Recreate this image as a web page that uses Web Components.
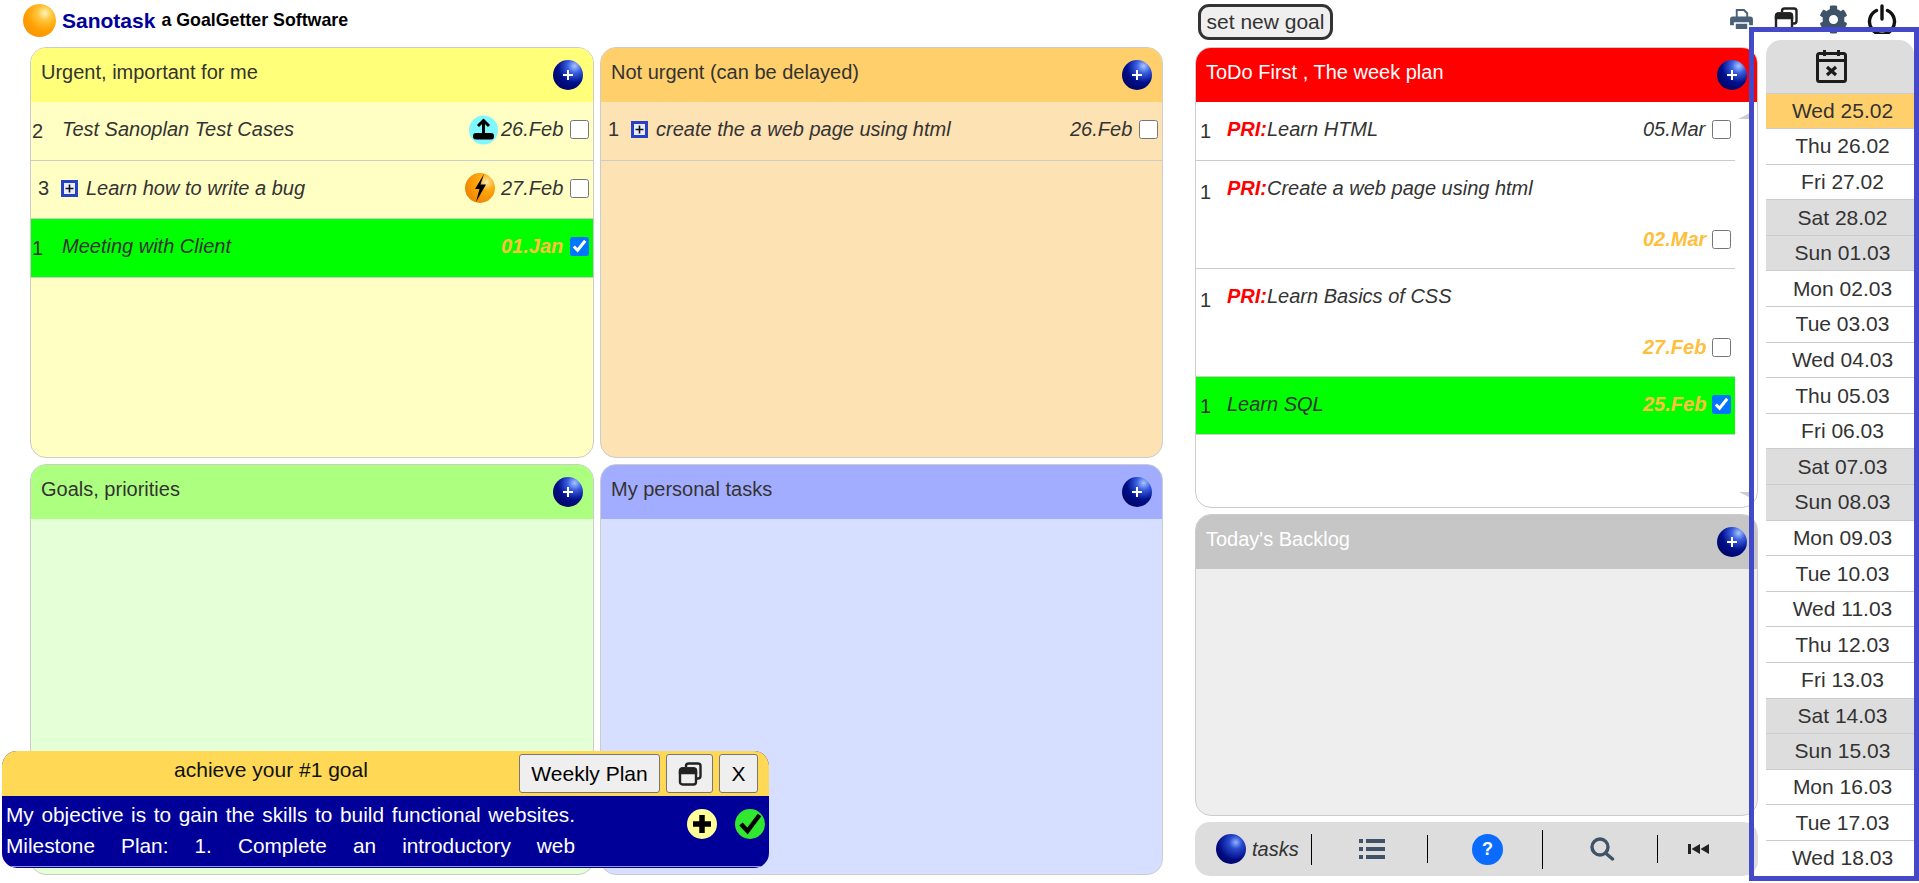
<!DOCTYPE html>
<html lang="en">
<head>
<meta charset="utf-8">
<title>Sanotask</title>
<style>
  html, body { margin: 0; height: 100%; overflow: hidden; background: #fff; }
  body { font-family: "Liberation Sans", Arial, sans-serif; color: #333; }
  quad-card[tone=urgent] { --head: #ffff7a; --body: #ffffc4; }
  quad-card[tone=later] { --head: #ffcf6b; --body: #fde2b4; }
  quad-card[tone=goals] { --head: #adff80; --body: #e5ffd6; }
  quad-card[tone=personal] { --head: #a3adff; --body: #d6dfff; }
  quad-card[tone=todo] { --head: #ff0000; --body: #fff; --head-text: #fff; }
  quad-card[tone=backlog] { --head: #c6c6c6; --body: #eee; --head-text: #fff; }
  .pri { color: #f00; font-weight: bold; }
</style>
</head>
<body>
<sano-app>
  <top-bar slot="top"></top-bar>

  <quad-card slot="quad" tone="urgent" heading="Urgent, important for me">
    <task-row num="2" date="26.Feb" badge="upload">Test Sanoplan Test Cases</task-row>
    <task-row num="3" date="27.Feb" badge="bolt" expand>Learn how to write a bug</task-row>
    <task-row num="1" date="01.Jan" done>Meeting with Client</task-row>
  </quad-card>
  <quad-card slot="quad" tone="later" heading="Not urgent (can be delayed)">
    <task-row num="1" date="26.Feb" expand>create the a web page using html</task-row>
  </quad-card>
  <quad-card slot="quad" tone="goals" heading="Goals, priorities"></quad-card>
  <quad-card slot="quad" tone="personal" heading="My personal tasks"></quad-card>

  <quad-card slot="side" tone="todo" heading="ToDo First , The week plan" arrows style="flex:0 0 460.5px">
    <task-row side num="1" date="05.Mar"><span class="pri">PRI:</span>Learn HTML</task-row>
    <task-row side wrap num="1" date="02.Mar" late><span class="pri">PRI:</span>Create a web page using html</task-row>
    <task-row side wrap num="1" date="27.Feb" late><span class="pri">PRI:</span>Learn Basics of CSS</task-row>
    <task-row side num="1" date="25.Feb" done>Learn SQL</task-row>
  </quad-card>
  <quad-card slot="side" tone="backlog" heading="Today's Backlog" style="flex:1 1 0"></quad-card>
  <tool-bar slot="side"></tool-bar>

  <cal-strip slot="cal"></cal-strip>
</sano-app>
<goal-popup></goal-popup>

<script>
const COPY_ICON = `<svg viewBox="0 0 24 24" width="24" height="24" fill="none" stroke="#222" stroke-width="2.4">
  <path d="M8 5V4a2.5 2.5 0 0 1 2.5-2.5H20A2.5 2.5 0 0 1 22.5 4v10a2.5 2.5 0 0 1-2.5 2.5h-1"/>
  <rect x="2" y="6.5" width="16" height="16" rx="2.5"/>
  <path d="M2 11V9a2.5 2.5 0 0 1 2.5-2.5h11A2.5 2.5 0 0 1 18 9v2z" fill="#222"/>
</svg>`;

const GEAR = 'M487.4 315.7l-42.6-24.6c4.3-23.2 4.3-47 0-70.2l42.6-24.6c4.9-2.8 7.1-8.6 5.5-14-11.1-35.6-30-67.8-54.7-94.6-3.8-4.1-10-5.1-14.8-2.3L380.8 110c-17.9-15.4-38.5-27.3-60.8-35.1V25.8c0-5.6-3.9-10.5-9.4-11.7-36.7-8.2-74.3-7.8-109.2 0-5.5 1.2-9.4 6.1-9.4 11.7V75c-22.2 7.9-42.8 19.8-60.8 35.1L88.7 85.5c-4.9-2.8-11-1.9-14.8 2.3-24.7 26.7-43.6 58.9-54.7 94.6-1.7 5.4.6 11.2 5.5 14L67.3 221c-4.3 23.2-4.3 47 0 70.2l-42.6 24.6c-4.9 2.8-7.1 8.6-5.5 14 11.1 35.6 30 67.8 54.7 94.6 3.8 4.1 10 5.1 14.8 2.3l42.6-24.6c17.9 15.4 38.5 27.3 60.8 35.1v49.2c0 5.6 3.9 10.5 9.4 11.7 36.7 8.2 74.3 7.8 109.2 0 5.5-1.2 9.4-6.1 9.4-11.7v-49.2c22.2-7.9 42.8-19.8 60.8-35.1l42.6 24.6c4.9 2.8 11 1.9 14.8-2.3 24.7-26.7 43.6-58.9 54.7-94.6 1.5-5.5-.7-11.3-5.6-14.1zM256 336c-44.1 0-80-35.9-80-80s35.9-80 80-80 80 35.9 80 80-35.9 80-80 80z';

class SanoApp extends HTMLElement {
  constructor() {
    super();
    this.attachShadow({ mode: 'open' });
    this.shadowRoot.innerHTML = `
      <style>
        :host { display: block; height: 883px; }
        .main { display: flex; align-items: flex-start; height: 829px; padding-left: 30px; }
        .quads { display: grid; grid-template-columns: 564px 563px; grid-template-rows: 411px 411px;
          column-gap: 6px; row-gap: 6px; width: 1133px; flex: none; }
        .side { display: flex; flex-direction: column; gap: 6.5px; width: 563px; height: 829px;
          margin-left: 32px; flex: none; }
        .cal { flex: none; margin: -20px 0 0 -9px; position: relative; z-index: 2; }
      </style>
      <slot name="top"></slot>
      <div class="main">
        <div class="quads"><slot name="quad"></slot></div>
        <div class="side"><slot name="side"></slot></div>
        <div class="cal"><slot name="cal"></slot></div>
      </div>
    `;
  }
}

class TopBar extends HTMLElement {
  connectedCallback() {
    this.attachShadow({ mode: 'open' }).innerHTML = `
      <style>
        :host { display: flex; height: 47px; align-items: flex-start; }
        .logo { width: 1198px; padding: 4px 0 0 23px; display: flex; align-items: center; flex: none; box-sizing: border-box; }
        .ball { width: 33px; height: 33px; border-radius: 50%; flex: none;
          background: radial-gradient(circle at 66% 28%, #fff6c0 0, #ffc63d 22%, #ff9f00 55%, #f58a00 100%); }
        .brand { font-weight: bold; font-size: 21px; color: #000099; margin-left: 6px; }
        .tag { font-weight: bold; font-size: 17.8px; color: #000; margin-left: 6px; }
        button { font: 21px "Liberation Sans", Arial, sans-serif; color: #333; background: #efefef;
          border: 3px solid #333; border-radius: 11px; width: 135px; height: 36px; padding: 0; margin-top: 4px; flex: none; }
        .tools { display: flex; align-items: center; margin-left: auto; padding-right: 22px; height: 38px; }
        .tools > * { margin-left: 21px; }
        svg { display: block; }
      </style>
      <div class="logo">
        <span class="ball"></span>
        <span class="brand">Sanotask</span>
        <span class="tag">a GoalGetter Software</span>
      </div>
      <button>set new goal</button>
      <div class="tools">
        <svg width="23" height="20" viewBox="0 0 24 21" fill="#4a6178">
          <path d="M6 0h9l4 4v6h-2V5l-3-3H8v8H6z"/>
          <path d="M3 8h18a3 3 0 0 1 3 3v6h-4v-3H4v3H0v-6a3 3 0 0 1 3-3z"/>
          <path d="M6 15.5h12V21H6z"/>
        </svg>
        <span>${COPY_ICON}</span>
        <svg width="29" height="29" viewBox="0 0 512 512" fill="#3f5368"><path d="${GEAR}"/></svg>
        <svg style="margin-left:19px" width="30" height="30" viewBox="0 0 30 30" fill="none" stroke="#111" stroke-width="3.4" stroke-linecap="round">
          <path d="M9.5 6.5a12.5 12.5 0 1 0 11 0"/><path d="M15 2V15"/>
        </svg>
      </div>
    `;
  }
}

class OrbButton extends HTMLElement {
  connectedCallback() {
    this.attachShadow({ mode: 'open' }).innerHTML = `
      <style>
        :host { display: block; width: 30px; height: 30px; border-radius: 50%; flex: none;
          background: radial-gradient(circle at 72% 20%, #a9c6ff 0, #3a5ee0 22%, #000f8a 52%, #00004d 100%); }
        svg { display: block; }
      </style>
      <svg width="30" height="30" viewBox="0 0 30 30" stroke="#fff" stroke-width="2">
        <path d="M15 10v10M10 15h10"/>
      </svg>
    `;
  }
}

class QuadCard extends HTMLElement {
  connectedCallback() {
    this.attachShadow({ mode: 'open' }).innerHTML = `
      <style>
        :host { display: flex; flex-direction: column; position: relative; overflow: hidden;
          box-sizing: border-box; border: 1px solid #ccc; border-radius: 16px; background: var(--body); min-height: 0; }
        header { display: flex; align-items: center; justify-content: space-between; flex: none;
          height: 54px; box-sizing: border-box; padding: 0 10px 0 10px; background: var(--head); }
        h2 { margin: 0 0 5px; font-weight: normal; font-size: 20px; color: var(--head-text, #333); }
        .rows { flex: 1; }
        .up, .down { position: absolute; right: 3px; width: 16px; height: 8px; background: #ccc; }
        .up { top: 63px; clip-path: polygon(100% 0, 100% 100%, 0 100%); }
        .down { bottom: 7px; clip-path: polygon(0 0, 100% 0, 100% 100%); }
      </style>
      <header><h2>${this.getAttribute('heading')}</h2><orb-button></orb-button></header>
      <div class="rows"><slot></slot></div>
      ${this.hasAttribute('arrows') ? '<i class="up"></i><i class="down"></i>' : ''}
    `;
  }
}

class TaskRow extends HTMLElement {
  badge() {
    const kind = this.getAttribute('badge');
    if (kind === 'upload') {
      return `<svg class="badge" width="29" height="30" viewBox="0 0 29 30">
        <circle cx="14.5" cy="15" r="14.5" fill="#7ff7ff"/>
        <path d="M14.5 19V6M9 11l5.5-5.5L20 11" fill="none" stroke="#000" stroke-width="3"/>
        <rect x="4" y="18" width="21" height="6.5" rx="3" fill="#000"/>
      </svg>`;
    }
    if (kind === 'bolt') {
      return `<svg class="badge bolt" width="30" height="30" viewBox="0 0 30 30">
        <defs><radialGradient id="b" cx=".72" cy=".3" r=".8">
          <stop offset="0" stop-color="#ffe9a8"/><stop offset=".35" stop-color="#ffa90f"/><stop offset="1" stop-color="#ef8200"/>
        </radialGradient></defs>
        <circle cx="15" cy="15" r="15" fill="url(#b)"/>
        <path d="M19 1 10 16h4.5L11 29l10-17.5h-5.5z" fill="#000"/>
      </svg>`;
    }
    return '';
  }

  connectedCallback() {
    const expand = this.hasAttribute('expand') ? `
      <svg class="plus" width="17" height="17" viewBox="0 0 17 17">
        <rect x="1.5" y="1.5" width="14" height="14" fill="#e8ecff" stroke="#2840c4" stroke-width="3"/>
        <path d="M8.5 4.5v8M4.5 8.5h8" stroke="#111" stroke-width="1.6"/>
      </svg>` : '';
    this.attachShadow({ mode: 'open' }).innerHTML = `
      <style>
        :host { display: block; font-size: 20px; color: #333; }
        .row { display: flex; flex-wrap: nowrap; align-items: center; height: 58.5px; box-sizing: border-box;
          border-bottom: 1px solid #ccc; padding: 0 4px 2px 0; }
        .num { flex: none; width: 30px; padding-left: 1px; margin-top: 4px; box-sizing: border-box; }
        .title { font-style: italic; padding-left: 1px; white-space: nowrap; }
        .end { display: flex; align-items: center; margin-left: auto; flex: none; }
        .date { font-style: italic; width: 61px; text-align: right; white-space: nowrap; }
        .badge { display: block; margin-right: 3px; }
        .bolt { margin-right: 6px; }
        .plus { flex: none; margin-right: 7px; }
        input { width: 19px; height: 19px; margin: 0 0 0 8px; flex: none; }

        :host([expand]) .num { padding-left: 7px; margin-top: 0; width: 30px; }
        :host([done]) .row { background: #00ff00; }
        :host([done]) .date, :host([late]) .date { color: #ffbf3d; font-weight: bold; }

        :host([side]) .row { width: 539px; }
        :host([side]) .num { padding-left: 4px; }
        :host([wrap]) .row { flex-wrap: wrap; height: 108px; align-items: flex-start; align-content: flex-start; padding-bottom: 0; }
        :host([wrap]) .num, :host([wrap]) .title { height: 55px; line-height: 55px; }
        :host([wrap]) .title { flex: 0 0 calc(100% - 31px); }
        :host([wrap]) .end { height: 40px; }
      </style>
      <div class="row">
        <span class="num">${this.getAttribute('num')}</span>
        ${expand}
        <span class="title"><slot></slot></span>
        <span class="end">
          ${this.badge()}
          <span class="date">${this.getAttribute('date')}</span>
          <input type="checkbox" ${this.hasAttribute('done') ? 'checked' : ''}>
        </span>
      </div>
    `;
  }
}

class ToolBar extends HTMLElement {
  connectedCallback() {
    this.attachShadow({ mode: 'open' }).innerHTML = `
      <style>
        :host { display: flex; flex: 0 0 54px; align-items: center; background: #ddd; border-radius: 15px; }
        .tasks { display: flex; align-items: center; width: 116px; box-sizing: border-box; padding-left: 21px; flex: none; }
        .orb { width: 30px; height: 30px; border-radius: 50%; flex: none;
          background: radial-gradient(circle at 66% 28%, #8fb4ff 0, #2a4bd0 22%, #000a80 60%, #00004d 100%); }
        em { font-size: 20px; color: #333; margin-left: 6px; }
        .cell { flex: 0 0 114px; box-sizing: border-box; padding-left: 5px; display: flex; justify-content: center; align-items: center; }
        .cell.wide { flex-basis: 115px; }
        .sep { flex: none; width: 1px; background: #000; }
        .help { width: 31px; height: 31px; border-radius: 50%; background: #0a6cff; color: #fff;
          font-weight: bold; font-size: 18px; display: flex; align-items: center; justify-content: center; }
        svg { display: block; }
      </style>
      <div class="tasks"><span class="orb"></span><em>tasks</em></div>
      <i class="sep" style="height:31px"></i>
      <div class="cell wide">
        <svg width="26" height="20" viewBox="0 0 26 20" fill="#3f5368">
          <path d="M0 0h4v4H0zM7 0h19v4H7zM0 8h4v4H0zM7 8h19v4H7zM0 16h4v4H0zM7 16h19v4H7z"/>
        </svg>
      </div>
      <i class="sep" style="height:28px"></i>
      <div class="cell"><span class="help">?</span></div>
      <i class="sep" style="height:39px"></i>
      <div class="cell">
        <svg width="25" height="24" viewBox="0 0 25 24" fill="none" stroke="#3f5368" stroke-width="3.4" stroke-linecap="round">
          <circle cx="10" cy="10" r="8"/><path d="M16 16.5l6.5 5.5"/>
        </svg>
      </div>
      <i class="sep" style="height:28px"></i>
      <div class="cell" style="flex:0 0 80px;padding-left:0">
        <svg width="21" height="10" viewBox="0 0 21 10" fill="#222">
          <path d="M0 0h3v10H0zM12 0v10L3.5 5zM21 0v10l-8.5-5z"/>
        </svg>
      </div>
    `;
  }
}

class CalStrip extends HTMLElement {
  connectedCallback() {
    const days = ['Wed 25.02', 'Thu 26.02', 'Fri 27.02', 'Sat 28.02', 'Sun 01.03', 'Mon 02.03', 'Tue 03.03', 'Wed 04.03',
      'Thu 05.03', 'Fri 06.03', 'Sat 07.03', 'Sun 08.03', 'Mon 09.03', 'Tue 10.03', 'Wed 11.03', 'Thu 12.03',
      'Fri 13.03', 'Sat 14.03', 'Sun 15.03', 'Mon 16.03', 'Tue 17.03', 'Wed 18.03'];
    const cls = d => d === 'Wed 25.02' ? 'today' : /^S/.test(d) ? 'we' : '';
    this.attachShadow({ mode: 'open' }).innerHTML = `
      <style>
        :host { display: block; width: 170px; height: 854px; box-sizing: border-box; border: 5.5px solid #4349c8; padding: 7.5px 0 0 11.5px; }
        .panel { height: 100%; overflow: hidden; border-radius: 15px 15px 0 0; width: 148px; }
        .head { height: 54px; background: #ddd; display: flex; justify-content: center; align-items: center;
          border-bottom: 1px solid #ccc; box-sizing: border-box; padding-right: 16px; }
        .day { height: 35.6px; box-sizing: border-box; border-bottom: 1px solid #ccc; font-size: 21px; color: #333;
          display: flex; align-items: center; justify-content: center; padding-left: 6px; }
        .today { background: #ffcf6b; }
        .we { background: #ddd; }
        svg { display: block; }
      </style>
      <div class="panel">
        <div class="head">
          <svg width="31" height="34" viewBox="0 0 31 34" fill="none" stroke="#1c1c1c" stroke-width="3">
            <rect x="1.5" y="4.5" width="28" height="28" rx="2"/>
            <path d="M1.5 11.5h28M8.5 1v6M22.5 1v6"/>
            <path d="M11 18l9 8M20 18l-9 8" stroke-width="3.2"/>
          </svg>
        </div>
        ${days.map(d => `<div class="day ${cls(d)}">${d}</div>`).join('')}
      </div>
    `;
  }
}

class GoalPopup extends HTMLElement {
  connectedCallback() {
    this.attachShadow({ mode: 'open' }).innerHTML = `
      <style>
        :host { position: absolute; left: 2px; top: 751px; width: 767px; height: 117px; z-index: 3;
          border-radius: 15px; overflow: hidden; background: #000099; display: block; }
        .head { display: flex; align-items: center; height: 45px; background: #ffd955; padding-right: 11px; box-sizing: border-box; }
        .title { width: 517px; box-sizing: border-box; padding-left: 21px; text-align: center; font-size: 21px; color: #111; margin-bottom: 8px; }
        button { font: 21px "Liberation Sans", Arial, sans-serif; color: #000; background: #efefef; border: 1px solid #767676;
          border-radius: 3px; height: 39px; padding: 0; margin-left: 6px; display: flex; align-items: center; justify-content: center; }
        .wk { width: 141px; margin-left: 0; }
        .cp { width: 47px; }
        .x { width: 39px; }
        .body { display: flex; height: 71px; border-bottom: 1px solid #9a9ad0; box-sizing: border-box; }
        .text { width: 569px; margin-left: 4px; padding-top: 2.5px; color: #fff; font-size: 20.8px; line-height: 31px; flex: none; }
        .text span { display: block; text-align: justify; text-align-last: justify; }
        .acts { display: flex; gap: 18px; margin-left: 112px; padding-top: 13px; }
        svg { display: block; }
      </style>
      <div class="head">
        <span class="title">achieve your #1 goal</span>
        <button class="wk">Weekly Plan</button>
        <button class="cp">${COPY_ICON}</button>
        <button class="x">X</button>
      </div>
      <div class="body">
        <div class="text">
          <span>My objective is to gain the skills to build functional websites.</span>
          <span>Milestone Plan: 1. Complete an introductory web</span>
        </div>
        <div class="acts">
          <svg width="30" height="30" viewBox="0 0 30 30">
            <circle cx="15" cy="15" r="15" fill="#ffff9a"/>
            <path d="M15 6v18M6 15h18" stroke="#000" stroke-width="5.5"/>
          </svg>
          <svg width="30" height="30" viewBox="0 0 30 30">
            <circle cx="15" cy="15" r="15" fill="#2fe82f"/>
            <path d="M6 15l6.5 7L24.5 6" fill="none" stroke="#000" stroke-width="4.5"/>
          </svg>
        </div>
      </div>
    `;
  }
}

customElements.define('sano-app', SanoApp);
customElements.define('top-bar', TopBar);
customElements.define('orb-button', OrbButton);
customElements.define('quad-card', QuadCard);
customElements.define('task-row', TaskRow);
customElements.define('tool-bar', ToolBar);
customElements.define('cal-strip', CalStrip);
customElements.define('goal-popup', GoalPopup);
</script>
</body>
</html>
